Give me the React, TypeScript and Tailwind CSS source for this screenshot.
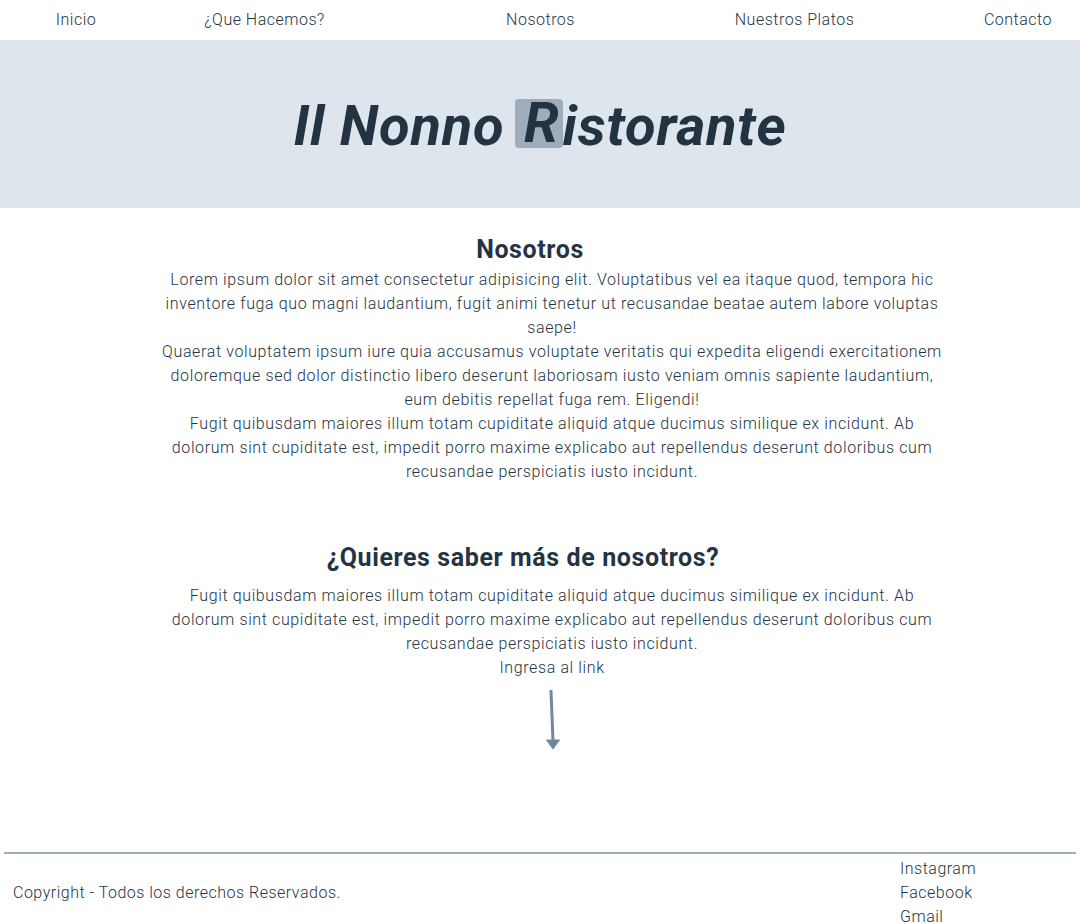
import React from "react"

const navItems = [
  { label: "Inicio", className: "w-[152px]" },
  { label: "¿Que Hacemos?", className: "w-[225px]" },
  { label: "Nosotros", className: "w-[327px]" },
  { label: "Nuestros Platos", className: "w-[181px]" },
  { label: "Contacto", className: "ml-[71px] w-[124px]" },
]

const Lines = ({ lines }: { lines: string[] }) => (
  <>
    {lines.map((l, i) => (
      <span key={i} className="block whitespace-nowrap">
        {l}
      </span>
    ))}
  </>
)

const ArrowDown = () => (
  <svg width="20" height="62" viewBox="0 0 20 62" className="block">
    <line x1="9" y1="1" x2="11" y2="51" stroke="#74879a" strokeWidth="3" strokeLinecap="round" />
    <polygon points="4.5,50 17.5,50 11,59" fill="#74879a" strokeLinejoin="round" stroke="#74879a" strokeWidth="1" />
  </svg>
)

export default function App() {
  return (
    <div className="bg-white text-[#253443] font-['Roboto','Liberation_Sans',sans-serif] font-light">
      <nav className="h-10 flex items-center text-base tracking-[0.5px]">
        {navItems.map((item) => (
          <a key={item.label} href="#" className={"text-center " + item.className}>
            {item.label}
          </a>
        ))}
      </nav>

      <header className="h-[168px] bg-[#dee5ed] flex items-center justify-center">
        <h1 className="text-[56px] font-bold italic tracking-[0.8px] text-[#243342] leading-none pt-1">
          Il Nonno{" "}
          <span className="inline-block align-[3px] bg-[#9eadbb] rounded-[4px] ml-[-4px] pl-[9px] pr-[3px] leading-[49px]">
            R
          </span>
          istorante
        </h1>
      </header>

      <main className="w-[800px] ml-[152px] text-center">
        <h2 className="mt-[26px] pr-[44px] text-[25px] tracking-[0.6px] leading-8 font-bold">Nosotros</h2>
        <p className="mt-[2px] text-base leading-6 tracking-[0.62px]">
          <Lines
            lines={[
              "Lorem ipsum dolor sit amet consectetur adipisicing elit. Voluptatibus vel ea itaque quod, tempora hic",
              "inventore fuga quo magni laudantium, fugit animi tenetur ut recusandae beatae autem labore voluptas",
              "saepe!",
              "Quaerat voluptatem ipsum iure quia accusamus voluptate veritatis qui expedita eligendi exercitationem",
              "doloremque sed dolor distinctio libero deserunt laboriosam iusto veniam omnis sapiente laudantium,",
              "eum debitis repellat fuga rem. Eligendi!",
              "Fugit quibusdam maiores illum totam cupiditate aliquid atque ducimus similique ex incidunt. Ab",
              "dolorum sint cupiditate est, impedit porro maxime explicabo aut repellendus deserunt doloribus cum",
              "recusandae perspiciatis iusto incidunt.",
            ]}
          />
        </p>

        <h2 className="mt-[58px] pr-[58px] text-[25px] tracking-[0.6px] leading-8 font-bold">
          ¿Quieres saber más de nosotros?
        </h2>
        <p className="mt-[10px] text-base leading-6 tracking-[0.62px]">
          <Lines
            lines={[
              "Fugit quibusdam maiores illum totam cupiditate aliquid atque ducimus similique ex incidunt. Ab",
              "dolorum sint cupiditate est, impedit porro maxime explicabo aut repellendus deserunt doloribus cum",
              "recusandae perspiciatis iusto incidunt.",
              "Ingresa al link",
            ]}
          />
        </p>
        <div className="mt-[10px] flex justify-center">
          <ArrowDown />
        </div>
      </main>

      <footer className="mt-[100px] mx-1 border-t-2 border-[#9eadbb] pt-[3px] flex items-center text-base leading-6 tracking-[0.5px]">
        <p className="pl-[9px] w-[896px]">Copyright - Todos los derechos Reservados.</p>
        <ul>
          <li>Instagram</li>
          <li>Facebook</li>
          <li>Gmail</li>
        </ul>
      </footer>
    </div>
  )
}
